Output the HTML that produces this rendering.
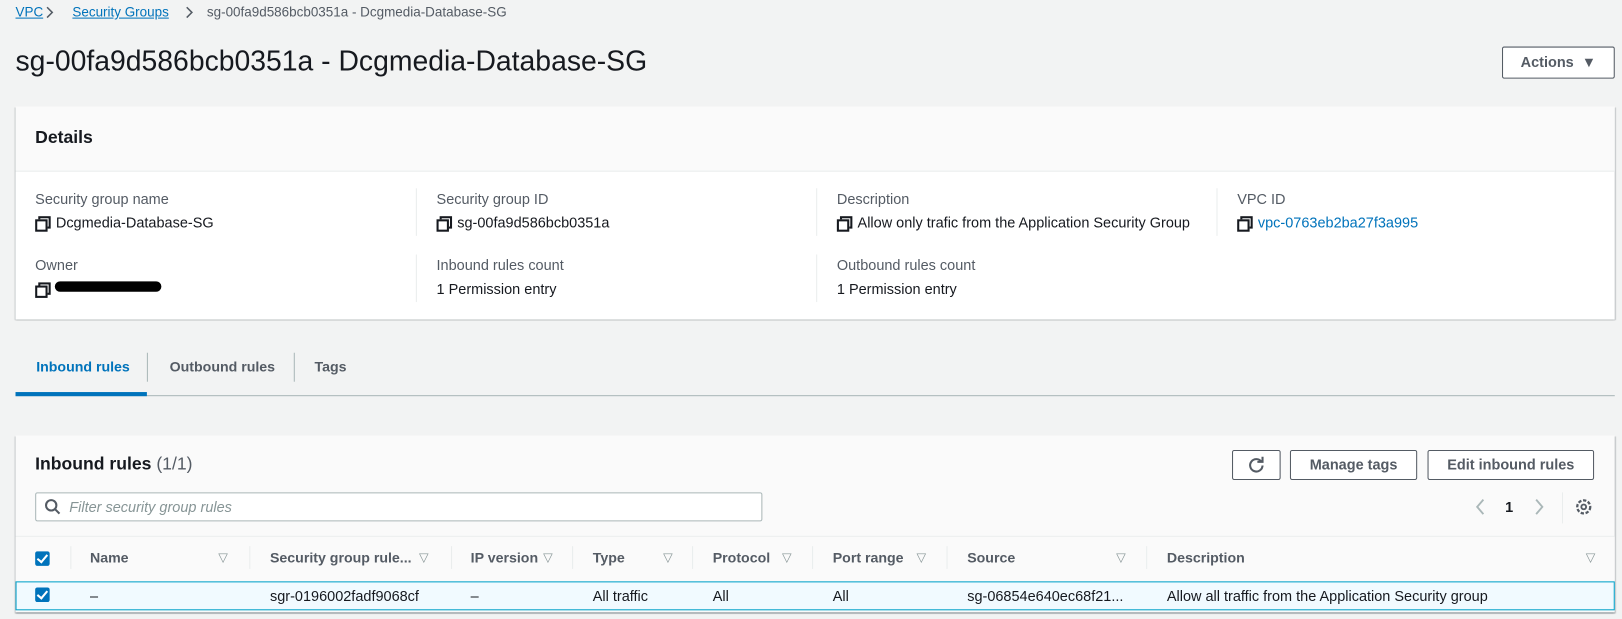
<!DOCTYPE html>
<html><head><meta charset="utf-8"><style>
*{box-sizing:border-box;margin:0;padding:0}
body{width:1622px;height:618px;background:#f2f3f3;font-family:"Liberation Sans",sans-serif;font-size:14px;color:#16191f;overflow:hidden}
#w{position:relative;width:1568px;height:598px;transform:scale(1.03444);transform-origin:0 0}
.a{position:absolute;white-space:nowrap}
a,.lnk{color:#0073bb}
.lbl{color:#545b64}
.b{font-weight:bold}
.panel{position:absolute;background:#fff;box-shadow:0 1px 1px rgba(0,28,36,.3),1px 1px 1px rgba(0,28,36,.15),-1px 1px 1px rgba(0,28,36,.15)}
.btn{position:absolute;border:1px solid #545b64;border-radius:2px;background:#fff;color:#545b64;font-weight:bold;font-size:14px;text-align:center}
.vd{position:absolute;width:1px;background:#eaeded}
.cp{display:inline-block;position:relative;width:13px;height:12px;vertical-align:-1px;margin-right:7px}
.cp:before{content:"";position:absolute;left:3px;top:0;width:8px;height:8px;border:2px solid #16191f}
.cp:after{content:"";position:absolute;left:0;top:3px;width:8px;height:8px;border:2px solid #16191f;background:#fff}
.tri{color:#879596;font-size:12px}
.cb{position:absolute;width:14px;height:14px;background:#0073bb;border-radius:2px}
.cb:after{content:"";position:absolute;left:4px;top:1px;width:4px;height:8px;border:solid #fff;border-width:0 2px 2px 0;transform:rotate(40deg)}
.h{font-size:13.7px}
</style></head><body><div id="w">
<div class="a" style="left:15px;top:4px;font-size:13px"><a style="text-decoration:underline">VPC</a></div>
<svg class="a" style="left:44px;top:6px" width="8" height="12" viewBox="0 0 8 12"><path d="M1.5 1l5 5-5 5" fill="none" stroke="#545b64" stroke-width="1.5"/></svg>
<div class="a" style="left:70px;top:4px;font-size:13px"><a style="text-decoration:underline">Security Groups</a></div>
<svg class="a" style="left:179px;top:6px" width="8" height="12" viewBox="0 0 8 12"><path d="M1.5 1l5 5-5 5" fill="none" stroke="#545b64" stroke-width="1.5"/></svg>
<div class="a lbl" style="left:200px;top:4px;font-size:13px">sg-00fa9d586bcb0351a - Dcgmedia-Database-SG</div>
<div class="a" style="left:15px;top:43px;font-size:27.4px">sg-00fa9d586bcb0351a - Dcgmedia-Database-SG</div>
<div class="btn" style="left:1452px;top:45px;width:109px;height:31px;line-height:29px">Actions &nbsp;&#9660;</div>

<div class="panel" style="left:15px;top:103px;width:1546px;height:206px">
 <div style="height:63px;background:#fafafa;border-bottom:1px solid #eaeded"></div>
</div>
<div class="a b" style="left:34px;top:123px;font-size:17px">Details</div>
<div class="vd" style="left:402px;top:182px;height:46px"></div>
<div class="vd" style="left:789px;top:182px;height:46px"></div>
<div class="vd" style="left:1176px;top:182px;height:46px"></div>
<div class="vd" style="left:402px;top:246px;height:46px"></div>
<div class="vd" style="left:789px;top:246px;height:46px"></div>
<div class="a lbl" style="left:34px;top:184px">Security group name</div>
<div class="a" style="left:34px;top:207px"><span class="cp"></span>Dcgmedia-Database-SG</div>
<div class="a lbl" style="left:422px;top:184px">Security group ID</div>
<div class="a" style="left:422px;top:207px"><span class="cp"></span>sg-00fa9d586bcb0351a</div>
<div class="a lbl" style="left:809px;top:184px">Description</div>
<div class="a" style="left:809px;top:207px"><span class="cp"></span>Allow only trafic from the Application Security Group</div>
<div class="a lbl" style="left:1196px;top:184px">VPC ID</div>
<div class="a" style="left:1196px;top:207px"><span class="cp"></span><span class="lnk">vpc-0763eb2ba27f3a995</span></div>
<div class="a lbl" style="left:34px;top:248px">Owner</div>
<div class="a" style="left:34px;top:271px"><span class="cp"></span></div>
<div class="a" style="left:53px;top:272px;width:103px;height:10px;background:#000;border-radius:5px"></div>
<div class="a lbl" style="left:422px;top:248px">Inbound rules count</div>
<div class="a" style="left:422px;top:271px">1 Permission entry</div>
<div class="a lbl" style="left:809px;top:248px">Outbound rules count</div>
<div class="a" style="left:809px;top:271px">1 Permission entry</div>

<div class="a" style="left:15px;top:382px;width:1546px;height:1px;background:#aab7b8"></div>
<div class="a" style="left:15px;top:379px;width:127px;height:4px;background:#0073bb"></div>
<div class="a b lnk h" style="left:35px;top:347px;color:#0073bb">Inbound rules</div>
<div class="vd" style="left:142px;top:341px;height:28px;background:#aab7b8"></div>
<div class="a b lbl h" style="left:164px;top:347px">Outbound rules</div>
<div class="vd" style="left:284px;top:341px;height:28px;background:#aab7b8"></div>
<div class="a b lbl h" style="left:304px;top:347px">Tags</div>

<div class="panel" style="left:15px;top:421px;width:1546px;height:171px;background:#fafafa"></div>
<div class="a" style="left:34px;top:439px;font-size:17px"><b>Inbound rules</b> <span class="lbl">(1/1)</span></div>
<div class="btn" style="left:1191px;top:435px;width:47px;height:29px"></div>
<svg class="a" style="left:1206px;top:441px" width="17" height="17" viewBox="0 0 17 17"><path d="M13.5 5.5A6 6 0 1 0 14.5 9" fill="none" stroke="#545b64" stroke-width="2"/><path d="M9.5 5.5h5v-5" fill="none" stroke="#545b64" stroke-width="2"/></svg>
<div class="btn" style="left:1247px;top:435px;width:123px;height:29px;line-height:27px">Manage tags</div>
<div class="btn" style="left:1380px;top:435px;width:161px;height:29px;line-height:27px">Edit inbound rules</div>
<div class="a" style="left:34px;top:476px;width:703px;height:28px;border:1px solid #aab7b8;border-radius:2px;background:#fff"></div>
<svg class="a" style="left:43px;top:482px" width="16" height="16" viewBox="0 0 16 16"><circle cx="6.5" cy="6.5" r="5" fill="none" stroke="#545b64" stroke-width="2"/><path d="M10 10l4.5 4.5" stroke="#545b64" stroke-width="2"/></svg>
<div class="a" style="left:67px;top:482px;font-style:italic;color:#879596">Filter security group rules</div>
<svg class="a" style="left:1425px;top:481px" width="12" height="18" viewBox="0 0 12 18"><path d="M9 2L3 9l6 7" fill="none" stroke="#aab7b8" stroke-width="1.8"/></svg>
<div class="a b" style="left:1455px;top:482px">1</div>
<svg class="a" style="left:1482px;top:481px" width="12" height="18" viewBox="0 0 12 18"><path d="M3 2l6 7-6 7" fill="none" stroke="#aab7b8" stroke-width="1.8"/></svg>
<div class="vd" style="left:1510px;top:476px;height:30px"></div>
<svg class="a" style="left:1522px;top:481px" width="18" height="18" viewBox="0 0 18 18"><circle cx="9" cy="9" r="6.3" fill="none" stroke="#545b64" stroke-width="2.2" stroke-dasharray="3.2 1.6"/><circle cx="9" cy="9" r="2.3" fill="none" stroke="#545b64" stroke-width="1.8"/></svg>
<div class="a" style="left:15px;top:518px;width:1546px;height:1px;background:#eaeded"></div>
<div class="a" style="left:15px;top:519px;width:1546px;height:44px;background:#fafafa"></div>
<div class="cb" style="left:34px;top:533px"></div>
<div class="vd" style="left:68px;top:528px;height:22px"></div>
<div class="a b lbl h" style="left:87px;top:532px">Name</div><div class="a tri" style="left:211px;top:532px">&#9661;</div>
<div class="vd" style="left:241px;top:528px;height:22px"></div>
<div class="a b lbl h" style="left:261px;top:532px">Security group rule...</div><div class="a tri" style="left:405px;top:532px">&#9661;</div>
<div class="vd" style="left:436px;top:528px;height:22px"></div>
<div class="a b lbl h" style="left:455px;top:532px">IP version</div><div class="a tri" style="left:525px;top:532px">&#9661;</div>
<div class="vd" style="left:553px;top:528px;height:22px"></div>
<div class="a b lbl h" style="left:573px;top:532px">Type</div><div class="a tri" style="left:641px;top:532px">&#9661;</div>
<div class="vd" style="left:669px;top:528px;height:22px"></div>
<div class="a b lbl h" style="left:689px;top:532px">Protocol</div><div class="a tri" style="left:756px;top:532px">&#9661;</div>
<div class="vd" style="left:785px;top:528px;height:22px"></div>
<div class="a b lbl h" style="left:805px;top:532px">Port range</div><div class="a tri" style="left:886px;top:532px">&#9661;</div>
<div class="vd" style="left:915px;top:528px;height:22px"></div>
<div class="a b lbl h" style="left:935px;top:532px">Source</div><div class="a tri" style="left:1079px;top:532px">&#9661;</div>
<div class="vd" style="left:1108px;top:528px;height:22px"></div>
<div class="a b lbl h" style="left:1128px;top:532px">Description</div><div class="a tri" style="left:1533px;top:532px">&#9661;</div>
<div class="a" style="left:15px;top:562px;width:1546px;height:28px;background:#f1faff;border:1px solid #00a1c9"></div>
<div class="cb" style="left:34px;top:568px"></div>
<div class="a" style="left:87px;top:568px">–</div>
<div class="a" style="left:261px;top:568px">sgr-0196002fadf9068cf</div>
<div class="a" style="left:455px;top:568px">–</div>
<div class="a" style="left:573px;top:568px">All traffic</div>
<div class="a" style="left:689px;top:568px">All</div>
<div class="a" style="left:805px;top:568px">All</div>
<div class="a" style="left:935px;top:568px">sg-06854e640ec68f21...</div>
<div class="a" style="left:1128px;top:568px">Allow all traffic from the Application Security group</div>
</div></body></html>
